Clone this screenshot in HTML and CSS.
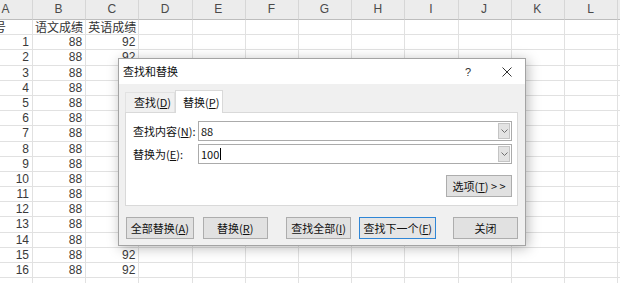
FILE: index.html
```html
<!DOCTYPE html>
<html lang="zh">
<head>
<meta charset="utf-8">
<title>查找和替换</title>
<link rel="stylesheet" href="styles.css">
</head>
<body>
<div class="sheet">
  <div class="row hdr"><span>A</span><span>B</span><span>C</span><span>D</span><span>E</span><span>F</span><span>G</span><span>H</span><span>I</span><span>J</span><span>K</span><span>L</span><span></span></div>
  <div class="row"><span class="t">序号</span><span class="t">语文成绩</span><span class="t">英语成绩</span><span></span><span></span><span></span><span></span><span></span><span></span><span></span><span></span><span></span><span></span></div>
  <div class="row"><span>1</span><span>88</span><span>92</span><span></span><span></span><span></span><span></span><span></span><span></span><span></span><span></span><span></span><span></span></div>
  <div class="row"><span>2</span><span>88</span><span>92</span><span></span><span></span><span></span><span></span><span></span><span></span><span></span><span></span><span></span><span></span></div>
  <div class="row"><span>3</span><span>88</span><span>92</span><span></span><span></span><span></span><span></span><span></span><span></span><span></span><span></span><span></span><span></span></div>
  <div class="row"><span>4</span><span>88</span><span>92</span><span></span><span></span><span></span><span></span><span></span><span></span><span></span><span></span><span></span><span></span></div>
  <div class="row"><span>5</span><span>88</span><span>92</span><span></span><span></span><span></span><span></span><span></span><span></span><span></span><span></span><span></span><span></span></div>
  <div class="row"><span>6</span><span>88</span><span>92</span><span></span><span></span><span></span><span></span><span></span><span></span><span></span><span></span><span></span><span></span></div>
  <div class="row"><span>7</span><span>88</span><span>92</span><span></span><span></span><span></span><span></span><span></span><span></span><span></span><span></span><span></span><span></span></div>
  <div class="row"><span>8</span><span>88</span><span>92</span><span></span><span></span><span></span><span></span><span></span><span></span><span></span><span></span><span></span><span></span></div>
  <div class="row"><span>9</span><span>88</span><span>92</span><span></span><span></span><span></span><span></span><span></span><span></span><span></span><span></span><span></span><span></span></div>
  <div class="row"><span>10</span><span>88</span><span>92</span><span></span><span></span><span></span><span></span><span></span><span></span><span></span><span></span><span></span><span></span></div>
  <div class="row"><span>11</span><span>88</span><span>92</span><span></span><span></span><span></span><span></span><span></span><span></span><span></span><span></span><span></span><span></span></div>
  <div class="row"><span>12</span><span>88</span><span>92</span><span></span><span></span><span></span><span></span><span></span><span></span><span></span><span></span><span></span><span></span></div>
  <div class="row"><span>13</span><span>88</span><span>92</span><span></span><span></span><span></span><span></span><span></span><span></span><span></span><span></span><span></span><span></span></div>
  <div class="row"><span>14</span><span>88</span><span>92</span><span></span><span></span><span></span><span></span><span></span><span></span><span></span><span></span><span></span><span></span></div>
  <div class="row"><span>15</span><span>88</span><span>92</span><span></span><span></span><span></span><span></span><span></span><span></span><span></span><span></span><span></span><span></span></div>
  <div class="row"><span>16</span><span>88</span><span>92</span><span></span><span></span><span></span><span></span><span></span><span></span><span></span><span></span><span></span><span></span></div>
  <div class="row"><span></span><span></span><span></span><span></span><span></span><span></span><span></span><span></span><span></span><span></span><span></span><span></span><span></span></div>
</div>

<div class="dialog">
  <div class="titlebar">
    <span class="title">查找和替换</span>
    <span class="help">?</span>
    <span class="close"><svg width="10" height="10" viewBox="0 0 10 10"><path d="M0.5 0.5 L9.5 9.5 M9.5 0.5 L0.5 9.5" stroke="#333" stroke-width="1" fill="none"/></svg></span>
  </div>
  <div class="body">
    <div class="tabs">
      <div class="tab">查找(<u>D</u>)</div>
      <div class="tab active">替换(<u>P</u>)</div>
    </div>
    <div class="panel">
      <div class="field">
        <span class="label">查找内容(<u>N</u>):</span>
        <div class="combo"><span class="val">88</span><span class="drop"><svg width="7" height="4" viewBox="0 0 7 4"><polyline points="0.5,0.5 3.5,3.5 6.5,0.5" stroke="#707070" stroke-width="1" fill="none"/></svg></span></div>
      </div>
      <div class="field gap">
        <span class="label">替换为(<u>E</u>):</span>
        <div class="combo"><span class="val">100<span class="caret"></span></span><span class="drop"><svg width="7" height="4" viewBox="0 0 7 4"><polyline points="0.5,0.5 3.5,3.5 6.5,0.5" stroke="#707070" stroke-width="1" fill="none"/></svg></span></div>
      </div>
      <div class="opts"><button class="btn w-opt">选项(<u>T</u>) &gt; &gt;</button></div>
    </div>
    <div class="actions">
      <button class="btn b1">全部替换(<u>A</u>)</button>
      <button class="btn b2">替换(<u>R</u>)</button>
      <button class="btn b3">查找全部(<u>I</u>)</button>
      <button class="btn b4 default">查找下一个(<u>F</u>)</button>
      <button class="btn b5">关闭</button>
    </div>
  </div>
</div>
</body>
</html>
```

FILE: styles.css
```css
html, body {
  margin: 0;
  padding: 0;
}
body {
  width: 620px;
  height: 283px;
  overflow: hidden;
  background: #ffffff;
  position: relative;
  font-family: "Liberation Sans", "Noto Sans CJK SC", sans-serif;
}

.sheet {
  margin-left: -20px;
}
.row {
  display: grid;
  grid-template-columns: 53px repeat(12, 53.2px);
  height: 15.2px;
}
.row > span {
  box-sizing: border-box;
  border-right: 1px solid #e1e1e1;
  border-bottom: 1px solid #e1e1e1;
  font-size: 12px;
  line-height: 14px;
  padding: 0 3px 0 2px;
  text-align: right;
  color: #3a3a3a;
  overflow: hidden;
  white-space: nowrap;
}
.row > span.t {
  text-align: left;
  font-family: "Noto Sans CJK SC", sans-serif;
  font-size: 12px;
  color: #333;
  overflow: visible;
  padding-left: 2px;
}
.row.hdr {
  height: 20px;
  background: #ececec;
}
.row.hdr > span {
  text-align: center;
  line-height: 19px;
  font-family: "Liberation Sans", sans-serif;
  font-size: 12px;
  color: #4a4a4a;
  border-right-color: #d6d6d6;
  border-bottom-color: #bdbdbd;
}

/* Dialog */
.dialog {
  position: absolute;
  left: 118px;
  top: 58px;
  width: 408px;
  height: 188px;
  box-sizing: border-box;
  border: 1px solid #a3a3a3;
  background: #f0f0f0;
  box-shadow: 2px 2px 12px rgba(0, 0, 0, 0.28);
  font-family: "Noto Sans CJK SC", sans-serif;
  font-size: 11px;
  color: #111;
  display: flex;
  flex-direction: column;
}
.titlebar {
  height: 25px;
  background: #ffffff;
  display: flex;
  align-items: center;
}
.title {
  flex: 1;
  padding-left: 4px;
  line-height: 25px;
}
.help {
  width: 12px;
  text-align: center;
  margin-right: 19px;
  color: #333;
  font-family: "Liberation Sans", sans-serif;
  font-size: 11px;
}
.close {
  width: 28px;
  height: 25px;
  display: flex;
  align-items: center;
  justify-content: center;
  margin-right: 4px;
}

.body {
  flex: 1;
  padding: 6px 7px 6px 6px;
  display: flex;
  flex-direction: column;
}
.tabs {
  display: flex;
  align-items: flex-end;
  height: 23px;
  margin-bottom: -1px;
  position: relative;
  z-index: 1;
}
.tab {
  box-sizing: border-box;
  height: 20px;
  width: 50px;
  padding-left: 8px;
  line-height: 19px;
  margin-bottom: 1px;
  border: 1px solid #e2e2e2;
  border-bottom: none;
  background: #f0f0f0;
}
.tab.active {
  width: 48px;
  height: 23px;
  margin-bottom: 0;
  padding-left: 7px;
  line-height: 23px;
  background: #ffffff;
  border-color: #d9d9d9;
}
.panel {
  box-sizing: border-box;
  height: 94px;
  border: 1px solid #d9d9d9;
  background: #ffffff;
  padding: 8px 5px 8px 7px;
  display: flex;
  flex-direction: column;
}
.field {
  display: flex;
  align-items: center;
  height: 20px;
}
.field.gap {
  margin-top: 3px;
}
.label {
  width: 65px;
}
.combo {
  flex: 1;
  height: 20px;
  box-sizing: border-box;
  border: 1px solid #ababab;
  background: #fff;
  display: flex;
  align-items: stretch;
}
.val {
  flex: 1;
  padding-left: 2px;
  line-height: 18px;
  display: flex;
  align-items: center;
}
.caret {
  display: inline-block;
  width: 1px;
  height: 12px;
  background: #000;
  margin-left: 1px;
}
.drop {
  width: 12px;
  box-sizing: border-box;
  margin: 1px;
  background: #e3e3e3;
  border: 1px solid #c4c4c4;
  display: flex;
  align-items: center;
  justify-content: center;
}
.opts {
  margin-top: 11px;
  display: flex;
  justify-content: flex-end;
}
.btn {
  height: 22px;
  box-sizing: border-box;
  border: 1px solid #adadad;
  background: #e1e1e1;
  font-family: "Noto Sans CJK SC", sans-serif;
  font-size: 11px;
  color: #111;
  padding: 0;
  line-height: 20px;
  text-align: center;
}
.w-opt {
  width: 66px;
}
.actions {
  margin-top: 11px;
  display: flex;
}
.b1 { width: 68px; margin-left: 1px; }
.b2 { width: 65px; margin-left: 9px; }
.b3 { width: 66px; margin-left: 18px; }
.b4 { width: 77px; margin-left: 8px; }
.b5 { width: 65px; margin-left: 17px; }
.btn.default {
  border-color: #2f86d6;
  background: #e5e5e5;
}
```
